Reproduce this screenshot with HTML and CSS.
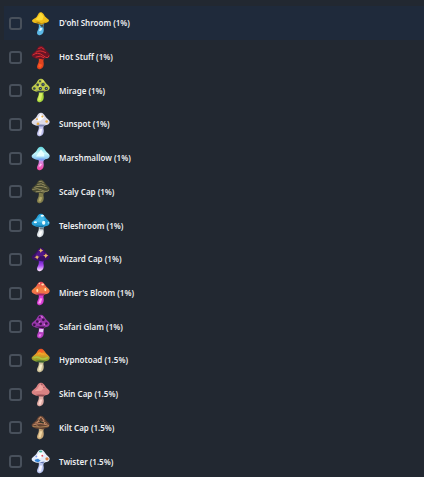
FILE: index.html
```html
<!DOCTYPE html>
<html lang="en">
<head>
<meta charset="utf-8">
<meta name="viewport" content="width=device-width, initial-scale=1">
<title>Mushrooms</title>
<link rel="stylesheet" href="styles.css">
</head>
<body>
<svg class="defs" aria-hidden="true">
  <defs>
    <path id="cap" d="M30 2C36 2 40 8 44 14C48 20 57 24 56 30C55 36 49 38 43 39L36 43L26 41C16 41 3 38 2 31C1 25 12 21 17 13C20 7 24 2 30 2Z"/>
    <path id="stem" d="M23 39L39 39C37 44 37 48 38 53C39 60 37 71 27 72C18 72 17 65 19 60C22 54 25 48 23 39Z"/>
    <path id="gill" d="M15 38Q29 36 43 38L38 43H24Z"/>
    <linearGradient id="marsh" x1="0" y1="0" x2="0" y2="1"><stop offset="0" stop-color="#62d6de"/><stop offset=".5" stop-color="#c4f5fa"/><stop offset="1" stop-color="#79b8f0"/></linearGradient>
    <linearGradient id="marshStem" x1="0" y1="0" x2="0" y2="1"><stop offset="0" stop-color="#c79cf5"/><stop offset="1" stop-color="#fb43a2"/></linearGradient>
    <linearGradient id="wizStem" x1="0" y1="0" x2="0" y2="1"><stop offset="0" stop-color="#5f18bd"/><stop offset=".5" stop-color="#a94af0"/><stop offset="1" stop-color="#ffe9ff"/></linearGradient>
    <linearGradient id="miner" x1="0" y1="0" x2="0" y2="1"><stop offset="0" stop-color="#e5435c"/><stop offset=".5" stop-color="#f4803d"/><stop offset="1" stop-color="#ef6650"/></linearGradient>
    <linearGradient id="hypno" x1="0" y1="0" x2="0" y2="1"><stop offset="0" stop-color="#ea4a22"/><stop offset=".4" stop-color="#e99a25"/><stop offset="1" stop-color="#6fa12e"/></linearGradient>
  </defs>
</svg>
<ul class="list">
  <li class="row row-active"><label class="item"><input class="check" type="checkbox">
    <svg class="icon" viewBox="0 0 60 74" aria-hidden="true"><use href="#stem" fill="#5cb9e8"/><path d="M25 40H38L34 50Z" fill="#4b4940"/><path d="M27 50L34 51L31 58L24 60Z" fill="#d9f5ff"/><path d="M29 3C36 3 39 11 43 17C48 22 55 25 54 29C51 36 41 35 35 39C27 42 24 36 17 36C10 36 3 34 3 29C5 23 15 22 19 14C22 8 24 3 29 3Z" fill="#efbd1b"/><path d="M29 5L38 16L34 27L22 28L14 25L21 17Z" fill="#ffdc35"/><path d="M12 32L22 32L31 36L46 32L38 37L27 39Z" fill="#b8890f"/></svg>
    <span class="name">D'oh! Shroom (1%)</span></label></li>
  <li class="row"><label class="item"><input class="check" type="checkbox">
    <svg class="icon" viewBox="0 0 60 74" aria-hidden="true"><use href="#stem" fill="#e0431f"/><path d="M23 55L34 59L29 68L22 66Z" fill="#ff5b25"/><use href="#cap" fill="#6b1526"/><path d="M22 10Q32 3 40 13M14 22Q25 12 45 23M5 30Q20 18 36 31T54 31M14 36Q29 29 40 38" fill="none" stroke="#dd2f33" stroke-width="3"/></svg>
    <span class="name">Hot Stuff (1%)</span></label></li>
  <li class="row"><label class="item"><input class="check" type="checkbox">
    <svg class="icon" viewBox="0 0 60 74" aria-hidden="true"><use href="#stem" fill="#a9d83c"/><path d="M25 45H34L30 66L21 67Z" fill="#dbed67"/><use href="#cap" fill="#bdc94a"/><g fill="#35424a"><circle cx="27" cy="9" r="3"/><circle cx="20" cy="20" r="4"/><circle cx="36" cy="19" r="5"/><circle cx="10" cy="31" r="4"/><circle cx="28" cy="31" r="5"/><circle cx="46" cy="31" r="5"/><path d="M15 38H43L37 43H24Z"/></g><path d="M26 19L29 24L24 27ZM35 4L39 10L34 12Z" fill="#f2ed82"/><path d="M35 18H38M27 31H30M45 31H48" stroke="#6f8fb0" stroke-width="3"/></svg>
    <span class="name">Mirage (1%)</span></label></li>
  <li class="row"><label class="item"><input class="check" type="checkbox">
    <svg class="icon" viewBox="0 0 60 74" aria-hidden="true"><use href="#stem" fill="#bfc1ee"/><path d="M26 50H34L30 68L22 67Z" fill="#f4f2ff"/><use href="#cap" fill="#dddbe8"/><use href="#gill" fill="#777fae"/><path d="M29 5L40 17L28 26L16 26Z" fill="#fff"/><g fill="#e7aa45"><circle cx="34" cy="13" r="3"/><circle cx="18" cy="21" r="3"/><circle cx="47" cy="28" r="4"/><circle cx="21" cy="35" r="4"/></g></svg>
    <span class="name">Sunspot (1%)</span></label></li>
  <li class="row"><label class="item"><input class="check" type="checkbox">
    <svg class="icon" viewBox="0 0 60 74" aria-hidden="true"><use href="#stem" fill="url(#marshStem)"/><path d="M28 52L33 54L28 61L23 61Z" fill="#ffc5f1"/><use href="#cap" fill="url(#marsh)"/><path d="M30 10L39 21L40 31L15 31L23 19Z" fill="#e5ffff"/><use href="#gill" fill="#7aa0ee"/></svg>
    <span class="name">Marshmallow (1%)</span></label></li>
  <li class="row"><label class="item"><input class="check" type="checkbox">
    <svg class="icon" viewBox="0 0 60 74" aria-hidden="true"><use href="#stem" fill="#817d4b"/><path d="M26 53L34 55L29 67L22 67Z" fill="#b2a86a"/><use href="#cap" fill="#4a4b32"/><path d="M23 8Q31 3 38 11M19 16Q30 10 43 19M10 25Q25 17 49 27M4 31Q19 25 33 33T54 32M14 38Q29 34 41 39" fill="none" stroke="#979062" stroke-width="3"/></svg>
    <span class="name">Scaly Cap (1%)</span></label></li>
  <li class="row"><label class="item"><input class="check" type="checkbox">
    <svg class="icon" viewBox="0 0 60 74" aria-hidden="true"><use href="#stem" fill="#dce3e7"/><path d="M25 43H39L36 49L26 48Z" fill="#6a7780"/><path d="M26 54H34L29 68L22 67Z" fill="#fff"/><use href="#cap" fill="#279fd6"/><path d="M29 5L42 17L32 29L10 25L21 16Z" fill="#48bbea"/><g fill="#efffff"><ellipse cx="34" cy="8" rx="5" ry="3"/><ellipse cx="13" cy="27" rx="5" ry="3"/><ellipse cx="38" cy="29" rx="5" ry="6"/><circle cx="52" cy="29" r="2"/></g><path d="M12 36L27 38L40 37L35 42H26Z" fill="#166e9e"/></svg>
    <span class="name">Teleshroom (1%)</span></label></li>
  <li class="row"><label class="item"><input class="check" type="checkbox">
    <svg class="icon" viewBox="0 0 60 74" aria-hidden="true"><use href="#stem" fill="url(#wizStem)"/><use href="#cap" fill="#381064"/><path d="M29 4L42 19L34 28L12 25Z" fill="#511689"/><g fill="#edb867"><path d="M29 3L32 8L37 9L32 12L29 17L26 11L22 9L27 8Z"/><path d="M18 24L21 28L26 29L21 32L19 37L15 32L10 30L15 28Z"/><path d="M45 18L47 23L52 25L47 28L44 33L41 27L36 26L42 23Z"/></g></svg>
    <span class="name">Wizard Cap (1%)</span></label></li>
  <li class="row"><label class="item"><input class="check" type="checkbox">
    <svg class="icon" viewBox="0 0 60 74" aria-hidden="true"><use href="#stem" fill="#d63bd3"/><path d="M27 51L34 52L29 67L21 67Z" fill="#ff9df1"/><use href="#cap" fill="url(#miner)"/><use href="#gill" fill="#9e286a"/><g fill="#ffe2b0"><ellipse cx="35" cy="10" rx="4" ry="3"/><ellipse cx="19" cy="28" rx="3" ry="5"/><ellipse cx="43" cy="25" rx="3" ry="5"/><circle cx="25" cy="7" r="2"/></g></svg>
    <span class="name">Miner's Bloom (1%)</span></label></li>
  <li class="row"><label class="item"><input class="check" type="checkbox">
    <svg class="icon" viewBox="0 0 60 74" aria-hidden="true"><use href="#stem" fill="#b53fc2"/><path d="M24 45L38 44L36 54L24 53Z" fill="#e7c9fa"/><path d="M24 60L32 60L28 68L22 67Z" fill="#ed7bec"/><use href="#cap" fill="#9837ab"/><g fill="#391445"><circle cx="26" cy="9" r="3"/><circle cx="37" cy="17" r="4"/><circle cx="19" cy="22" r="4"/><circle cx="29" cy="29" r="4"/><circle cx="46" cy="28" r="4"/><circle cx="10" cy="32" r="4"/><path d="M14 37L43 37L36 43L25 41Z"/></g><path d="M31 6L35 11M23 25L28 22M38 31H42" stroke="#df72db" stroke-width="4"/></svg>
    <span class="name">Safari Glam (1%)</span></label></li>
  <li class="row"><label class="item"><input class="check" type="checkbox">
    <svg class="icon" viewBox="0 0 60 74" aria-hidden="true"><use href="#stem" fill="#cbbf96"/><path d="M26 49H34L30 67L22 67Z" fill="#f4eac5"/><use href="#cap" fill="url(#hypno)"/><path d="M7 29Q18 24 27 30T51 28" fill="none" stroke="#acc440" stroke-width="5"/><path d="M21 17L27 14L33 18L40 17" fill="none" stroke="#f1aa2c" stroke-width="4"/><path d="M28 7L33 12" stroke="#ff5a28" stroke-width="6"/><use href="#gill" fill="#3f6232"/></svg>
    <span class="name">Hypnotoad (1.5%)</span></label></li>
  <li class="row"><label class="item"><input class="check" type="checkbox">
    <svg class="icon" viewBox="0 0 60 74" aria-hidden="true"><use href="#stem" fill="#dfaaa4"/><path d="M26 52H34L29 68L22 67Z" fill="#ffd6ce"/><use href="#cap" fill="#d98283"/><path d="M27 6L39 17L31 26L10 27L20 19Z" fill="#f0a39e"/><use href="#gill" fill="#8d4b51"/><path d="M30 6H35M37 16H40" stroke="#944e58" stroke-width="3"/></svg>
    <span class="name">Skin Cap (1.5%)</span></label></li>
  <li class="row"><label class="item"><input class="check" type="checkbox">
    <svg class="icon" viewBox="0 0 60 74" aria-hidden="true"><use href="#stem" fill="#c9a878"/><path d="M26 48H34L29 67L22 67Z" fill="#efd5a3"/><use href="#cap" fill="#634333"/><path d="M22 12Q30 0 40 16M13 23Q29 13 47 25M5 30Q25 20 54 31" fill="none" stroke="#bf8462" stroke-width="3"/><path d="M29 4L19 23M34 8L42 29M12 25L23 36" fill="none" stroke="#d8a077" stroke-width="2"/><path d="M26 19L38 23" stroke="#30362a" stroke-width="4"/><path d="M5 34Q29 38 53 33" fill="none" stroke="#a98255" stroke-width="3"/></svg>
    <span class="name">Kilt Cap (1.5%)</span></label></li>
  <li class="row"><label class="item"><input class="check" type="checkbox">
    <svg class="icon" viewBox="0 0 60 74" aria-hidden="true"><use href="#stem" fill="#b9c4ef"/><path d="M26 49H34L30 67L22 67Z" fill="#f4f3ff"/><use href="#cap" fill="#e4ecfa"/><path d="M29 5L40 18L27 28L13 26Z" fill="#fff"/><path d="M11 32L21 29L29 35L21 39L12 36Z" fill="#3483d5"/><ellipse cx="29" cy="7" rx="5" ry="3" fill="#43b59f"/><circle cx="34" cy="20" r="3" fill="#e15265"/><ellipse cx="48" cy="29" rx="5" ry="5" fill="#dc8148"/><circle cx="16" cy="22" r="3" fill="#8b9fed"/><path d="M25 39L41 37L36 43Z" fill="#6475b3"/></svg>
    <span class="name">Twister (1.5%)</span></label></li>
</ul>
</body>
</html>
```
FILE: styles.css
```css
* {
  box-sizing: border-box;
}

body {
  margin: 0;
  min-height: 100vh;
  overflow: hidden;
  background: #222831;
  color: #eef0f2;
  font: 600 8px/12px "Noto Sans", "Open Sans", sans-serif;
}

.defs {
  position: absolute;
  width: 0;
  height: 0;
}

.list {
  display: grid;
  grid-auto-rows: 1fr;
  min-height: calc(100vh - 5px);
  margin: 6px 0 0 4px;
  padding: 0;
  list-style: none;
}

.row {
  display: flex;
}

.row-active {
  background: #1f2a3b;
}

.item {
  display: flex;
  flex: 1;
  align-items: center;
  padding: 1px 0 0 5px;
  cursor: pointer;
}

.check {
  appearance: none;
  flex: none;
  width: 13px;
  height: 13px;
  margin: 0 9px 0 0;
  border: 2px solid #48505b;
  border-radius: 3px;
}

.check:checked {
  background: #59616b;
}

.icon {
  flex: none;
  width: 20px;
  height: 25px;
  margin-right: 8px;
}

.name {
  white-space: nowrap;
}
```
